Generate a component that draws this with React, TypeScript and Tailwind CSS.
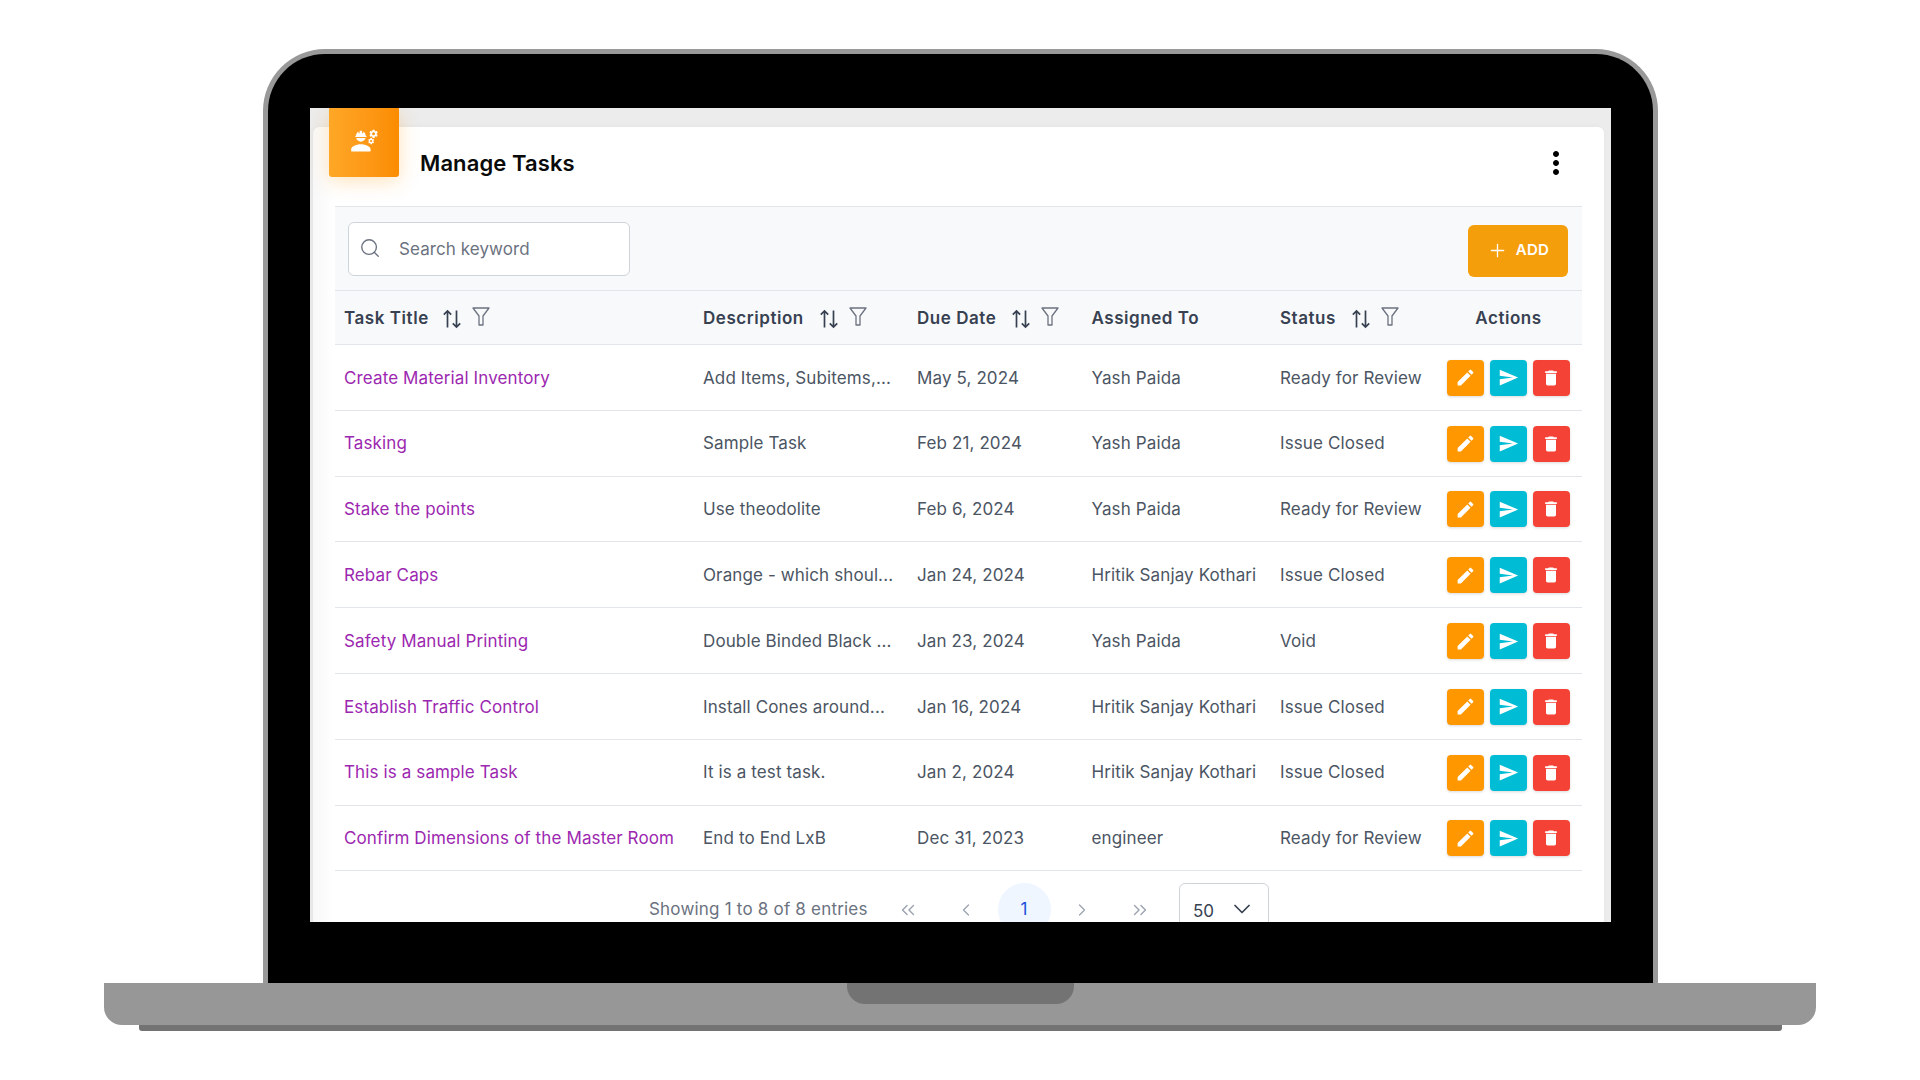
import { MdEngineering, MdMoreVert, MdEdit, MdSend, MdDelete } from "react-icons/md";
import { Search, Plus, ChevronsLeft, ChevronLeft, ChevronRight, ChevronsRight, ChevronDown } from "lucide-react";

const rows = [
  ["Create Material Inventory", "Add Items, Subitems,...", "May 5, 2024", "Yash Paida", "Ready for Review"],
  ["Tasking", "Sample Task", "Feb 21, 2024", "Yash Paida", "Issue Closed"],
  ["Stake the points", "Use theodolite", "Feb 6, 2024", "Yash Paida", "Ready for Review"],
  ["Rebar Caps", "Orange - which shoul...", "Jan 24, 2024", "Hritik Sanjay Kothari", "Issue Closed"],
  ["Safety Manual Printing", "Double Binded Black ...", "Jan 23, 2024", "Yash Paida", "Void"],
  ["Establish Traffic Control", "Install Cones around...", "Jan 16, 2024", "Hritik Sanjay Kothari", "Issue Closed"],
  ["This is a sample Task", "It is a test task.", "Jan 2, 2024", "Hritik Sanjay Kothari", "Issue Closed"],
  ["Confirm Dimensions of the Master Room", "End to End LxB", "Dec 31, 2023", "engineer", "Ready for Review"],
];

function SortIcon() {
  return (
    <svg width="20" height="20" viewBox="0 0 20 20" fill="none" stroke="#374151" strokeWidth="1.7" className="shrink-0 -ml-[1px] mt-[2px]">
      <path d="M5.5 18.5V2M1.8 5.7 5.5 2l3.7 3.7" />
      <path d="M14.5 1.5V18M10.8 14.3l3.7 3.7 3.7-3.7" />
    </svg>
  );
}

function FilterIcon() {
  return (
    <svg width="18" height="19" viewBox="0 0 18 19" fill="none" stroke="#6b7280" strokeWidth="1.3" strokeLinejoin="round" className="shrink-0 -mt-[3px]">
      <path d="M1 1h16l-6 8v9H7V9L1 1Z" />
    </svg>
  );
}

function HeaderCell({ label, tools, first }: { label: string; tools?: boolean; first?: boolean }) {
  return (
    <div className="flex items-center pl-[9px]">
      <span className="pt-[2px]">{label}</span>
      {tools && (
        <div className={`flex items-center gap-[10px] ${first ? "ml-[14px]" : "ml-[16px]"}`}>
          <SortIcon />
          <FilterIcon />
        </div>
      )}
    </div>
  );
}

const grid = "grid grid-cols-[359px_214px_174.5px_188.5px_158px_153px]";
const actionBtn = "w-[37px] h-[36px] rounded-[4px] flex items-center justify-center shadow-[0_1px_3px_rgba(0,0,0,0.15)]";

export default function App() {
  return (
    <div className="min-h-screen w-full bg-white flex flex-col items-center pt-[49px] [font-family:Inter,sans-serif] overflow-hidden">
      <div className="w-[1395px] ml-[1px] h-[934px] bg-black border-[5px] border-b-0 border-[#999999] rounded-t-[62px] pt-[54px] pl-[42px] pr-[42px] pb-[61px]">
        <div className="h-full bg-[#ececec] overflow-hidden pl-[3px] pr-[7px] pt-[19px]">
          <div className="relative h-[900px] bg-white rounded-t-[6px] shadow-[-1px_0_6px_rgba(0,0,0,0.04)] bg-gradient-to-r from-[#f8f8f8] from-0% to-white to-[1.6%]">
            <div className="absolute left-[16px] -top-[19px] w-[70px] h-[69px] pb-[4px] rounded-b-[3px] bg-gradient-to-r from-[#ffa726] to-[#fb8c00] shadow-[0_4px_20px_rgba(255,152,0,0.28)] flex items-center justify-center">
              <MdEngineering size={29} color="#ffffff" />
            </div>
            <div className="h-[79px] pb-[7px] flex items-center justify-between pl-[107px] pr-[30px]">
              <h1 className="text-[22px] font-semibold text-[#0a0a0a] tracking-[0.1px]">Manage Tasks</h1>
              <MdMoreVert size={36} color="#000000" />
            </div>
            <div className="mx-[22px]">
              <div className="h-[85px] bg-[#f8f9fa] border-y border-[#e2e5ea] flex items-center justify-between pl-[13px] pr-[14px]">
                <div className="w-[282px] h-[54px] bg-white border border-[#ced4da] rounded-[6px] flex items-center pl-[10px] gap-[18px]">
                  <Search size={22} color="#6b7280" strokeWidth={1.5} className="-mt-[2px]" />
                  <span className="text-[17px] text-[#6b7280] tracking-[0.08px] pt-[2px]">Search keyword</span>
                </div>
                <button className="w-[100px] h-[52px] mt-[4px] bg-[#f59e0b] rounded-[6px] flex items-center justify-center gap-[8px] text-white text-[15px] font-semibold tracking-[0.3px]">
                  <Plus size={21} strokeWidth={1.5} />
                  ADD
                </button>
              </div>
              <div className={`${grid} h-[54px] items-center bg-[#f8f9fa] border-b border-[#e2e5ea] text-[17px] tracking-[0.55px] font-semibold text-[#374151]`}>
                <HeaderCell label="Task Title" tools first />
                <HeaderCell label="Description" tools />
                <HeaderCell label="Due Date" tools />
                <HeaderCell label="Assigned To" />
                <HeaderCell label="Status" tools />
                <div className="text-center pl-[6px] pt-[2px]">Actions</div>
              </div>
              {rows.map((r) => (
                <div key={r[0]} className={`${grid} h-[65.8px] pt-[1px] items-center border-b border-[#e2e5ea] text-[17px] tracking-[0.12px] text-[#4b5563]`}>
                  <div className="pl-[9px] pt-[1px] text-[#9c27b0] whitespace-nowrap">{r[0]}</div>
                  <div className="pl-[9px] pt-[1px] whitespace-nowrap">{r[1]}</div>
                  <div className="pl-[9px] pt-[1px] whitespace-nowrap">{r[2]}</div>
                  <div className="pl-[9px] pt-[1px] whitespace-nowrap">{r[3]}</div>
                  <div className="pl-[9px] pt-[1px] whitespace-nowrap">{r[4]}</div>
                  <div className="flex justify-center gap-[6px] pl-[5px]">
                    <button className={`${actionBtn} bg-[#ff9800]`}><MdEdit size={21} color="#fff" /></button>
                    <button className={`${actionBtn} bg-[#00bcd4]`}><MdSend size={21} color="#fff" /></button>
                    <button className={`${actionBtn} bg-[#f44336]`}><MdDelete size={20} color="#fff" /></button>
                  </div>
                </div>
              ))}
              <div className="flex items-start h-[60px] pt-[12px] pl-[314px] text-[#6b7280]">
                <span className="w-[230px] text-[17px] whitespace-nowrap pt-[14px] leading-[24px] tracking-[0.2px]">Showing 1 to 8 of 8 entries</span>
                <div className="flex items-center h-[53px] w-[290px]">
                  <div className="w-[58px] flex justify-center"><ChevronsLeft size={22} strokeWidth={1.5} color="#9ca3af" /></div>
                  <div className="w-[58px] flex justify-center"><ChevronLeft size={20} strokeWidth={1.5} color="#9ca3af" /></div>
                  <div className="w-[58px] flex justify-center">
                    <div className="w-[53px] h-[53px] rounded-full bg-[#eff6ff] text-[#1d4ed8] text-[17px] flex items-center justify-center">1</div>
                  </div>
                  <div className="w-[58px] flex justify-center"><ChevronRight size={20} strokeWidth={1.5} color="#9ca3af" /></div>
                  <div className="w-[58px] flex justify-center"><ChevronsRight size={22} strokeWidth={1.5} color="#9ca3af" /></div>
                </div>
                <div className="w-[90px] h-[54px] ml-[10px] bg-white border border-[#ced4da] rounded-[6px] flex items-center pl-[13px] gap-[14px] text-[#374151] text-[17px]">
                  <span className="pt-[2px]">50</span>
                  <ChevronDown size={28} strokeWidth={1.5} color="#374151" className="-mt-[2px]" />
                </div>
              </div>
            </div>
          </div>
        </div>
      </div>
      <div className="relative w-[1712px] h-[42px] bg-[#979797] rounded-b-[18px] flex justify-center">
        <div className="w-[227px] h-[21px] bg-[#737373] rounded-b-[18px]" />
      </div>
      <div className="w-[1643px] h-[6px] bg-[#737373] rounded-b-[3px]" />
    </div>
  );
}
